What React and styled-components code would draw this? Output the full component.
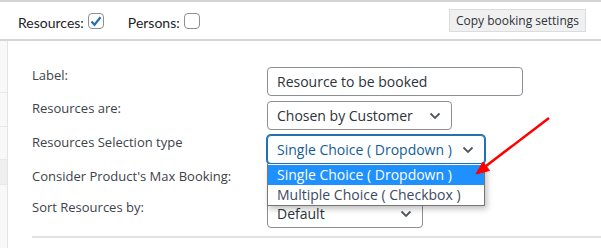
import React from "react";
import styled, { createGlobalStyle, css } from "styled-components";

const Global = createGlobalStyle`
  body {
    margin: 0;
    background: #fff;
    font-family: "Open Sans", "Liberation Sans", sans-serif;
    color: #3c434a;
  }
`;

const Page = styled.div`
  width: 601px;
  height: 248px;
  overflow: hidden;
  border-top: 2px solid #d4d4d4;
  box-sizing: border-box;
`;

const Header = styled.div`
  height: 37px;
  display: flex;
  align-items: center;
  padding: 0 15px 0 18px;
  border-bottom: 2px solid #d6d6d6;
  font-family: Lato, "Open Sans", sans-serif;
  font-size: 14px;
  color: #1d2327;
`;

const Toggle = styled.label`
  display: flex;
  align-items: center;
  gap: 4px;
  margin-right: 24px;
  padding-top: 3px;
`;

const Box = styled.span`
  width: 16px;
  height: 16px;
  box-sizing: border-box;
  border: 1px solid #8c8f94;
  border-radius: 4px;
  display: flex;
  align-items: center;
  justify-content: center;
  background: #fff;
  margin-top: -2px;
`;

const CopyButton = styled.button`
  margin-left: auto;
  height: 23px;
  padding: 0 6px;
  background: #f0f0f0;
  border: 1px solid #dcdcdc;
  font-family: "Open Sans", sans-serif;
  font-size: 12px;
  color: #2c3338;
  border-radius: 0;
`;

const Body = styled.div`
  display: flex;
`;

const Strip = styled.div`
  width: 7px;
  border-right: 1px solid #e4e4e4;
  background: #f9f9f9;
  display: flex;
  flex-direction: column;
  height: 209px;
`;

const StripCell = styled.div`
  height: ${p => p.h}px;
  flex-shrink: 0;
  border-bottom: 1px solid #e8e8e8;
  background: ${p => (p.dark ? "#efefef" : "transparent")};
  ${p => p.last && css`border-bottom: none; flex: 1;`}
`;

const Form = styled.div`
  position: relative;
  flex: 1;
  padding: 26px 0 0 24px;
`;

const Row = styled.div`
  display: grid;
  grid-template-columns: 235px auto;
  height: ${p => p.h}px;
  align-items: start;
`;

const Label = styled.div`
  font-size: 13px;
  line-height: 18px;
  margin-top: ${p => p.dy ?? 0}px;
  color: #3c434a;
`;

const Field = styled.div`
  width: ${p => p.w}px;
  height: 29px;
  box-sizing: border-box;
  border: 1px solid ${p => (p.focus ? "#2271b1" : "#8c8f94")};
  border-radius: 4px;
  ${p => p.focus && css`box-shadow: 0 0 0 1px #2271b1;`}
  display: flex;
  align-items: center;
  justify-content: space-between;
  padding: 0 10px 0 9px;
  font-size: 14px;
  color: ${p => (p.focus ? "#135e96" : "#2c3338")};
  background: #fff;
`;

const Chevron = () => (
  <svg width="12" height="8" viewBox="0 0 12 8">
    <path d="M1.5 1.5 L6 6 L10.5 1.5" fill="none" stroke="#50575e" strokeWidth="1.8" />
  </svg>
);

const List = styled.div`
  position: absolute;
  left: 259px;
  top: 123px;
  width: 218px;
  box-sizing: border-box;
  border: 1px solid #767676;
  border-top: none;
  padding-top: 1px;
  background: #fff;
  box-shadow: 2px 3px 6px rgba(0, 0, 0, 0.25);
  font-size: 14px;
  z-index: 2;
`;

const Option = styled.div`
  height: 20px;
  line-height: 20px;
  padding-left: 9px;
  background: ${p => (p.active ? "#1e90ff" : "#fff")};
  color: ${p => (p.active ? "#fff" : "#3b4a63")};
`;

const Divider = styled.div`
  height: 2px;
  background: #e2e2e2;
  margin-top: 7px;
`;

const Arrow = styled.svg`
  position: absolute;
  left: 440px;
  top: 76px;
  z-index: 3;
`;

export default function App() {
  return (
    <Page>
      <Global />
      <Header>
        <Toggle>
          Resources:
          <Box>
            <svg width="12" height="11" viewBox="0 0 12 11">
              <path d="M1.5 5.5 L4.5 8.7 L10.5 1.2" fill="none" stroke="#2271b1" strokeWidth="2.2" />
            </svg>
          </Box>
        </Toggle>
        <Toggle>
          Persons:
          <Box />
        </Toggle>
        <CopyButton>Copy booking settings</CopyButton>
      </Header>
      <Body>
        <Strip>
          <StripCell h={51} />
          <StripCell h={33} />
          <StripCell h={32} />
          <StripCell h={24} dark />
          <StripCell last />
        </Strip>
        <Form>
          <Row h={34}>
            <Label dy={-1}>Label:</Label>
            <Field w={256}>Resource to be booked</Field>
          </Row>
          <Row h={34}>
            <Label dy={-2}>Resources are:</Label>
            <Field w={185}>Chosen by Customer<Chevron /></Field>
          </Row>
          <Row h={34}>
            <Label dy={-2}>Resources Selection type</Label>
            <Field w={218} focus>Single Choice ( Dropdown )<Chevron /></Field>
          </Row>
          <Row h={30}>
            <Label dy={-2}>Consider Product's Max Booking:</Label>
            <div />
          </Row>
          <Row h={30}>
            <Label dy={-1}>Sort Resources by:</Label>
            <Field w={156}>Default<Chevron /></Field>
          </Row>
          <Divider />
          <List>
            <Option active>Single Choice ( Dropdown )</Option>
            <Option>Multiple Choice ( Checkbox )</Option>
          </List>
          <Arrow width="110" height="65" viewBox="0 0 110 65">
            <line x1="101" y1="1" x2="38" y2="49" stroke="#f00" strokeWidth="2.5" />
            <path d="M28 57 L41.5 53.5 L35 45 Z" fill="#f00" stroke="#f00" strokeWidth="1" />
          </Arrow>
        </Form>
      </Body>
    </Page>
  );
}
